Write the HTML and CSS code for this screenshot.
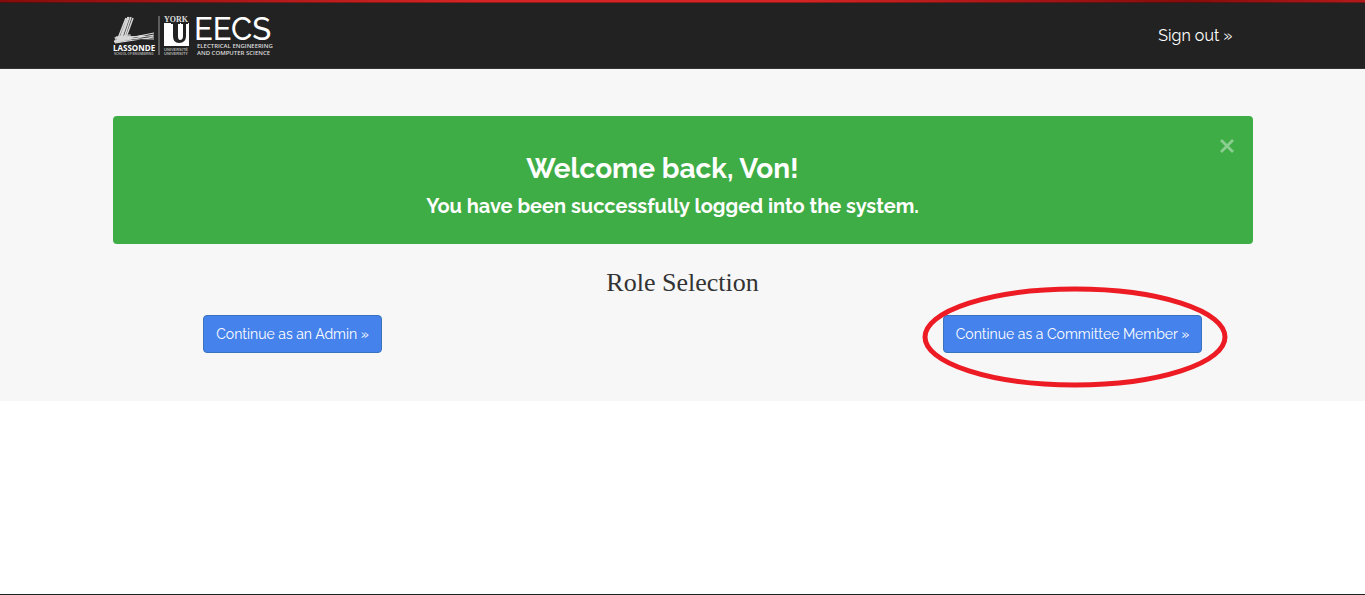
FILE: index.html
```html
<!DOCTYPE html>
<html lang="en">
<head>
<meta charset="utf-8">
<meta name="viewport" content="width=device-width, initial-scale=1">
<title>Role Selection</title>
<link rel="stylesheet" href="styles.css">
</head>
<body>
<header class="navbar">
  <div class="container navbar-inner">
    <a class="brand" href="#" aria-label="Lassonde, York University, EECS">
      <svg class="logo" width="170" height="50" viewBox="0 -5 170 50">
        <g fill="none" stroke="#d8d8d8">
          <path d="M4 27 13 4M6 27 15 3M8 26 16 3M10 27 18 3M12 26 20 4" stroke-width="1.5"/>
          <path d="M1 27 41 19M1 28 41 21M2 29 41 23M2 24 41 25M3 23 40 22" stroke-width="1.2"/>
          <path d="M2 26 18 23" stroke-width="6" opacity=".7"/>
        </g>
        <text class="logo-lassonde" x="0" y="37">LASSONDE</text>
        <text class="logo-school" x="1" y="41">SCHOOL OF ENGINEERING</text>
        <path d="M46 2V41" stroke="#999" stroke-width="1"/>
        <text class="logo-york" x="51" y="8">YORK</text>
        <path d="M51 9H76V32H51Z" fill="#fff"/>
        <path d="M58 9V10H60V22Q60 29 66 29Q73 29 73 22V10H75V9H68V10H70V22Q70 26 67 26Q65 26 65 22V10H67V9Z" fill="#222"/>
        <text class="logo-micro" x="51" y="37">UNIVERSITÉ</text>
        <text class="logo-micro" x="51" y="41">UNIVERSITY</text>
        <text class="logo-eecs" x="81" y="26">EECS</text>
        <text class="logo-dept" x="84" y="34">ELECTRICAL ENGINEERING</text>
        <text class="logo-dept" x="84" y="41">AND COMPUTER SCIENCE</text>
      </svg>
    </a>
    <a class="sign-out" href="#">Sign out »</a>
  </div>
</header>
<main class="main">
  <div class="container">
    <div class="alert" role="alert">
      <button class="close" type="button" aria-label="Close">
        <svg width="16" height="16" viewBox="0 0 16 16"><path d="M2 2 14 14M14 2 2 14" fill="none" stroke="currentColor" stroke-width="2.8"/></svg>
      </button>
      <h1 class="alert-title">Welcome back, Von!</h1>
      <p class="alert-text">You have been successfully logged into the system.</p>
    </div>
  </div>
  <div class="roles">
    <div class="role"><button class="btn" type="button">Continue as an Admin »</button></div>
    <h2 class="roles-title">Role Selection</h2>
    <div class="role">
      <div class="marked">
        <button class="btn" type="button">Continue as a Committee Member »</button>
        <svg class="ring" width="306" height="102" viewBox="0 0 306 102"><ellipse cx="153" cy="51" rx="150" ry="48" fill="none" stroke="#ed1c24" stroke-width="5"/></svg>
      </div>
    </div>
  </div>
</main>
<footer class="footer"></footer>
</body>
</html>
```
FILE: styles.css
```css
* { box-sizing: border-box; }
body {
  margin: 0;
  min-height: 100vh;
  display: flex;
  flex-direction: column;
  background: #fff;
  color: #333;
  font-family: Raleway, Lato, "Open Sans", sans-serif;
}
.navbar {
  border-bottom: 1px solid #333;
  background:
    linear-gradient(90deg, #850c0c, #d72424 35%, #d72424 58%, #850c0c 87%, #b31a1a) top / 100% 2px no-repeat,
    linear-gradient(90deg, #4d0f0f, #8a1c1c 35%, #8a1c1c 58%, #4d0f0f 87%, #701717) top / 100% 3px no-repeat,
    #222;
}
.container { width: 100%; max-width: 1170px; margin: 0 auto; padding: 0 15px; }
.navbar-inner { display: flex; justify-content: space-between; align-items: center; height: 68px; }
.brand { display: block; }
.logo { display: block; fill: #fff; }
.logo-lassonde { font: 700 8px "Open Sans", sans-serif; }
.logo-york { font: 700 8px "Liberation Serif", serif; fill: #ddd; }
.logo-micro { font: 700 4px "Liberation Sans", sans-serif; fill: #aaa; }
.logo-school { font: 700 3px "Liberation Sans", sans-serif; fill: #aaa; }
.logo-eecs { font: 500 31px Raleway, sans-serif; }
.logo-dept { font: 600 6px "Open Sans", sans-serif; fill: #ddd; }
.sign-out { margin-right: 20px; padding-top: 2px; color: #fff; font-size: 16px; text-decoration: none; }
.main { background: #f7f7f7; padding: 47px 0 48px; }
.alert {
  position: relative;
  padding: 36px 55px 24px 15px;
  background: #3fad46;
  border-radius: 4px;
  color: #fff;
  text-align: center;
}
.close { position: absolute; top: 20px; right: 16px; width: 20px; height: 20px; padding: 2px; border: 0; background: none; color: #fff; opacity: .4; }
.close svg { display: block; }
.alert-title { margin: 0; font-size: 28px; line-height: 34px; font-weight: 700; }
.alert-text { margin: 0 -20px 0 0; padding-top: 7px; font-size: 20px; line-height: 27px; font-weight: 700; }
.roles { display: grid; grid-template-columns: repeat(3, 1fr); max-width: 1170px; margin: 23px auto 0; }
.role { display: flex; justify-content: center; padding-top: 48px; }
.roles-title { margin: 0; text-align: center; font: 400 26px/32px Georgia, "Liberation Serif", serif; }
.btn {
  height: 38px;
  padding: 0 12px;
  border: 1px solid #3973bd;
  border-radius: 4px;
  background: #4582ec;
  color: #fff;
  font: inherit;
  font-size: 14px;
  white-space: nowrap;
}
.marked { position: relative; }
.ring { position: absolute; top: -29px; left: -21px; pointer-events: none; }
.footer { margin-top: auto; border-top: 1px solid #222; }
```
